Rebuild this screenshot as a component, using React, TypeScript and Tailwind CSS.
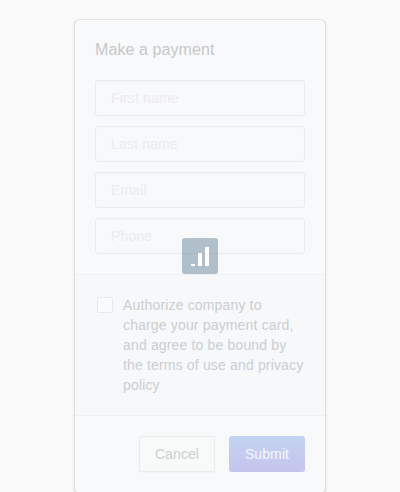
const fields = ['First name', 'Last name', 'Email', 'Phone'];

export default function App() {
  return (
    <div className="relative flex h-[492px] w-[400px] justify-center overflow-hidden bg-[#f9f9f9] pt-[19px] font-['Liberation_Sans',Arial,sans-serif] text-sm tracking-[0.16px]">
      <form className="flex h-[475px] w-[252px] shrink-0 flex-col rounded-md border border-x-[#dcdddf] border-t-[#e3e5e6] border-b-[#dcdddf] bg-[#f8f9fb] shadow-[0_1px_2px_#dcddde]">
        <section className="h-[255px] border-b border-[#eff1f2] px-5 pt-[18px]">
          <h1 className="mb-[18px] text-base leading-6 tracking-[0.08px] text-[#c6c8c9]">Make a payment</h1>
          <div className="flex flex-col gap-2.5">
            {fields.map((name) => (
              <input
                key={name}
                placeholder={name}
                aria-label={name}
                className="h-9 w-full rounded-[3px] border border-[#e9ebec] bg-transparent px-[15px] tracking-[0.16px] shadow-[inset_0_1px_1px_#f4f5f7] outline-none placeholder:text-[#eaecee]"
              />
            ))}
          </div>
        </section>
        <label className="flex h-[141px] gap-2.5 border-b border-[#eff1f2] bg-[#f7f8fa] pt-5 pr-5 pl-[22px] leading-5 text-[#c9cfd2]">
          <input type="checkbox" className="mt-[2px] h-4 w-4 shrink-0 appearance-none rounded-[2px] border border-[#e7e9eb] bg-[#f9fafb]" />
          <span className="w-[182px]">Authorize company to charge your payment card, and agree to be bound by the terms of use and privacy policy</span>
        </label>
        <footer className="flex justify-end gap-3.5 px-5 pt-5">
          <button type="button" className="h-9 w-[76px] rounded-[3px] border border-[#e9ebec] bg-[#f8f9f9] tracking-[0.1px] text-[#c9cfd2] shadow-[0_1px_1px_#f0f2f3]">Cancel</button>
          <button type="button" className="h-9 w-[76px] rounded-[3px] bg-linear-to-b from-[#c4d3f2] to-[#c5c4ed] tracking-[0.1px] text-[#f5f7fd]">Submit</button>
        </footer>
      </form>
      <div className="absolute top-[238px] left-[182px] flex h-9 w-9 items-end gap-[3px] rounded-[3px] bg-[#b1bfcb] pb-2 pl-[9px]">
        <i className="absolute top-[15px] left-0 h-px w-full bg-[#a9b7c3]" />
        <i className="relative h-[2px] w-1 bg-white" />
        <i className="relative h-[13px] w-1 bg-white" />
        <i className="relative h-[19px] w-1 bg-white" />
      </div>
    </div>
  );
}
